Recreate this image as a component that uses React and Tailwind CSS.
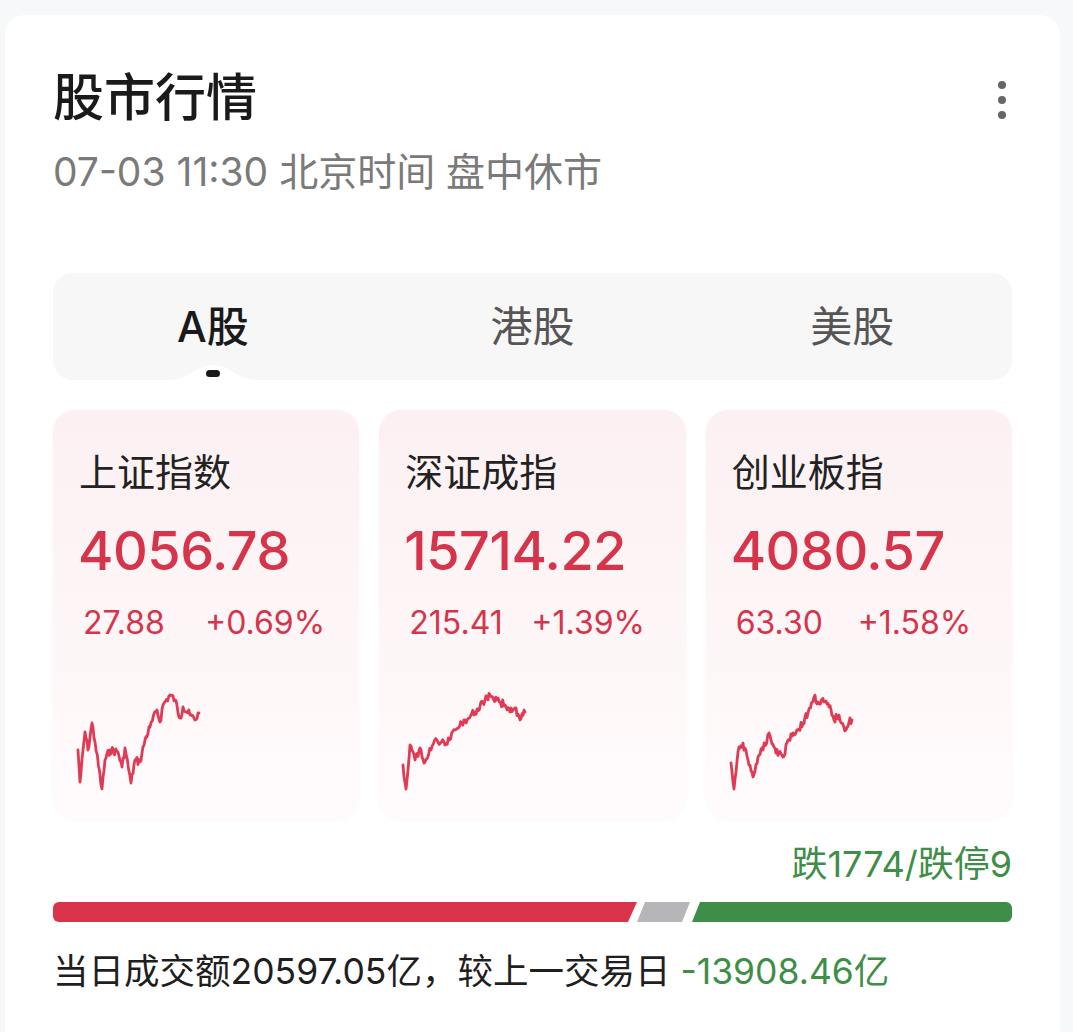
import React from 'react';

const indices = [
  {
    name: '上证指数',
    price: '4056.78',
    change: '27.88',
    pct: '+0.69%',
    seed: 7,
    points: [[1, 60], [3, 92], [8, 42], [11, 60], [15, 33], [18, 52], [25, 100], [28, 70], [33, 60], [41, 62], [45, 77], [48, 58], [54, 93], [58, 70], [63, 72], [68, 50], [73, 37], [80, 20], [83, 32], [86, 15], [93, 5], [98, 10], [103, 28], [106, 17], [113, 25], [118, 30], [122, 23]],
  },
  {
    name: '深证成指',
    price: '15714.22',
    change: '215.41',
    pct: '+1.39%',
    seed: 19,
    points: [[0, 75], [3, 100], [7, 55], [12, 70], [17, 58], [22, 72], [28, 60], [34, 50], [42, 55], [52, 40], [62, 30], [72, 22], [82, 10], [87, 5], [94, 10], [102, 15], [107, 22], [112, 18], [117, 30], [122, 22]],
  },
  {
    name: '创业板指',
    price: '4080.57',
    change: '63.30',
    pct: '+1.58%',
    seed: 31,
    points: [[1, 73], [4, 100], [9, 57], [13, 53], [18, 70], [23, 87], [28, 67], [33, 60], [39, 43], [44, 57], [49, 63], [53, 67], [58, 50], [63, 43], [68, 40], [73, 33], [78, 23], [84, 7], [88, 12], [94, 12], [99, 17], [104, 30], [109, 25], [116, 40], [119, 32], [122, 30]],
  },
];

// small seeded jitter so the intraday line looks like tick data
function buildLine(points, seed) {
  let s = seed;
  const rand = () => {
    s = (s * 9301 + 49297) % 233280;
    return s / 233280;
  };
  const out = [];
  for (let i = 0; i < points.length - 1; i++) {
    const [x0, y0] = points[i];
    const [x1, y1] = points[i + 1];
    const steps = Math.max(1, Math.round((x1 - x0) / 1.1));
    for (let k = 0; k < steps; k++) {
      const t = k / steps;
      const x = x0 + (x1 - x0) * t;
      const jitter = k === 0 ? 0 : (rand() - 0.5) * 8;
      const y = Math.min(99, Math.max(1, y0 + (y1 - y0) * t + jitter));
      out.push(`${x.toFixed(1)},${y.toFixed(1)}`);
    }
  }
  const last = points[points.length - 1];
  out.push(`${last[0]},${last[1]}`);
  return out.join(' ');
}

function Sparkline({ points, seed }) {
  return (
    <svg width="260" height="100" viewBox="0 0 260 100" className="-ml-[2px] overflow-visible">
      <polyline
        points={buildLine(points, seed)}
        fill="none"
        stroke="#e03b55"
        strokeWidth="2.8"
        strokeLinejoin="round"
        strokeLinecap="round"
      />
    </svg>
  );
}

function IndexCard({ item }) {
  return (
    <div className="flex flex-col rounded-[22px] bg-gradient-to-b from-[#fcf0f2] to-[#fffbfc] px-[26px] pt-[39px] pb-[30px] shadow-[0_0_4px_rgba(0,0,0,0.03)]">
      <div className="text-[38px] leading-[46px] text-[#222]">{item.name}</div>
      <div className="mt-[24px] -ml-[1px] text-[54px] leading-[64px] font-medium tracking-[-0.5px] text-[#d6344a]">{item.price}</div>
      <div className="mt-[20px] flex pl-[4px] text-[32px] leading-[40px] text-[#d6344a]">
        <span className="w-[122px]">{item.change}</span>
        <span>{item.pct}</span>
      </div>
      <div className="mt-[47px]">
        <Sparkline points={item.points} seed={item.seed} />
      </div>
    </div>
  );
}

function Tabs() {
  const tabs = ['A股', '港股', '美股'];
  return (
    <div className="mt-[78px] grid h-[107px] grid-cols-3 rounded-[20px] bg-[#f7f7f7]">
      {tabs.map((t, i) => (
        <div key={t} className="relative flex items-center justify-center">
          <span className={i === 0 ? 'text-[42px] font-medium text-[#1a1a1a]' : 'text-[42px] text-[#555]'}>{t}</span>
          {i === 0 && (
            <>
              <svg width="90" height="16" viewBox="0 0 90 16" className="absolute bottom-0 left-[115px]">
                <path d="M0 16 C22 16 28 1 45 1 C62 1 68 16 90 16 Z" fill="#fff" />
              </svg>
              <div className="absolute bottom-[3px] left-[153px] h-[7px] w-[14px] rounded-full bg-[#1a1a1a]" />
            </>
          )}
        </div>
      ))}
    </div>
  );
}

function BreadthBar() {
  return (
    <div className="mt-[18px] flex h-[20px]">
      <div className="h-full w-[584px] rounded-l-[6px] bg-[#d9344a] [clip-path:polygon(0_0,100%_0,calc(100%-9px)_100%,0_100%)]" />
      <div className="h-full w-[53px] bg-[#b6b6b9] [clip-path:polygon(8px_0,100%_0,calc(100%-8px)_100%,0_100%)]" />
      <div className="ml-[2px] h-full flex-1 rounded-r-[6px] bg-[#3e8e48] [clip-path:polygon(8px_0,100%_0,100%_100%,0_100%)]" />
    </div>
  );
}

export default function App() {
  return (
    <div className="min-h-screen bg-[#f7f8fa] pt-[15px] pl-[5px] pr-[13px] font-['Inter','Noto_Sans_CJK_SC',sans-serif]">
      <div className="min-h-[1017px] rounded-t-[20px] bg-white px-[48px] pt-[53px] pb-[40px]">
        <div className="flex items-start justify-between">
          <h1 className="text-[51px] leading-[60px] font-medium text-[#1a1a1a]">股市行情</h1>
          <div className="mt-[13px] mr-[6px] flex flex-col gap-[7px]">
            <span className="h-[8px] w-[8px] rounded-full bg-[#666]" />
            <span className="h-[8px] w-[8px] rounded-full bg-[#666]" />
            <span className="h-[8px] w-[8px] rounded-full bg-[#666]" />
          </div>
        </div>
        <div className="mt-[21px] text-[39px] leading-[46px] text-[#7a7a7a]">07-03 11:30 北京时间 盘中休市</div>

        <Tabs />

        <div className="mt-[30px] grid grid-cols-3 gap-[20px]">
          {indices.map((item) => (
            <IndexCard key={item.name} item={item} />
          ))}
        </div>

        <div className="mt-[24px] text-right text-[36px] leading-[40px] text-[#3e8e48]">跌1774/跌停9</div>
        <BreadthBar />

        <div className="mt-[28px] text-[35.5px] leading-[44px] text-[#1f1f1f]">
          当日成交额20597.05亿，较上一交易日 <span className="text-[#3e8e48]">-13908.46亿</span>
        </div>
      </div>
    </div>
  );
}
